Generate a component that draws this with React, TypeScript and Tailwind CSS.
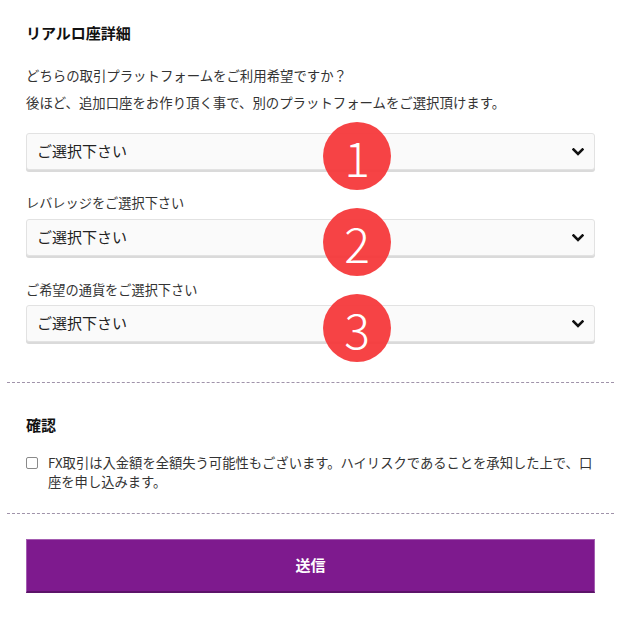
import * as React from "react"

function Chevron() {
  return (
    <svg width="12" height="8" viewBox="0 0 12 8" className="text-[#111]">
      <polyline points="1.5,1.5 6,6 10.5,1.5" fill="none" stroke="currentColor" strokeWidth="2.6" strokeLinecap="square" />
    </svg>
  )
}

function Select({ badge }: { badge: string }) {
  return (
    <div className="relative">
      <div className="flex h-[37px] items-center justify-between rounded-[3px] border border-[#e2e2e2] bg-[#fafafa] pl-[10px] pr-[10px] shadow-[0_2px_0_#dadada]">
        <span className="text-[15px] text-[#222]">ご選択下さい</span>
        <Chevron />
      </div>
      <div className="absolute left-[297px] top-[-11px] flex h-[68px] w-[68px] items-center justify-center rounded-full bg-[#f5393b]/95 text-[48px] font-light leading-none text-white">
        {badge}
      </div>
    </div>
  )
}

export default function App() {
  return (
    <div className="min-h-[620px] w-[621px] bg-white px-[7px] font-['Noto_Sans_CJK_JP',sans-serif] text-[#333]">
      <div className="px-[19px] pt-[22px]">
        <h2 className="text-[15px] font-bold leading-[22px] text-[#111]">リアルロ座詳細</h2>
        <p className="mt-[21px] text-[13.4px] leading-[20px]">どちらの取引プラットフォームをご利用希望ですか？</p>
        <p className="mt-[7px] text-[13.4px] leading-[20px]">後ほど、追加口座をお作り頂く事で、別のプラットフォームをご選択頂けます。</p>
        <div className="mt-[21px]">
          <Select badge="1" />
        </div>
        <p className="mt-[23px] text-[13.2px] leading-[20px]">レバレッジをご選択下さい</p>
        <div className="mt-[6px]">
          <Select badge="2" />
        </div>
        <p className="mt-[24px] text-[13.2px] leading-[20px]">ご希望の通貨をご選択下さい</p>
        <div className="mt-[5px]">
          <Select badge="3" />
        </div>
      </div>

      <div className="mt-[40px] border-t border-dashed border-[#a093aa]" />

      <div className="px-[19px]">
        <h2 className="mt-[31px] text-[15px] font-bold leading-[22px] text-[#111]">確認</h2>
        <label className="mt-[17px] flex items-start gap-[9px] text-[13.3px] leading-[19px]">
          <span className="mt-[4px] h-[12px] w-[12px] shrink-0 rounded-[2px] border border-[#8a8a8a] bg-white" />
          <span className="pl-[1px]">
            <span className="block whitespace-nowrap">FX取引は入金額を全額失う可能性もございます。ハイリスクであることを承知した上で、口</span>
            <span className="block">座を申し込みます。</span>
          </span>
        </label>
      </div>

      <div className="mt-[22px] border-t border-dashed border-[#a093aa]" />

      <div className="px-[19px] pt-[25px]">
        <button
          type="button"
          className="flex h-[54px] w-full items-center justify-center border border-[#a45db1] border-b-[2px] border-b-[#5c1469] bg-[#7e1a8e] text-[15px] font-bold text-white"
        >
          送信
        </button>
      </div>
    </div>
  )
}
